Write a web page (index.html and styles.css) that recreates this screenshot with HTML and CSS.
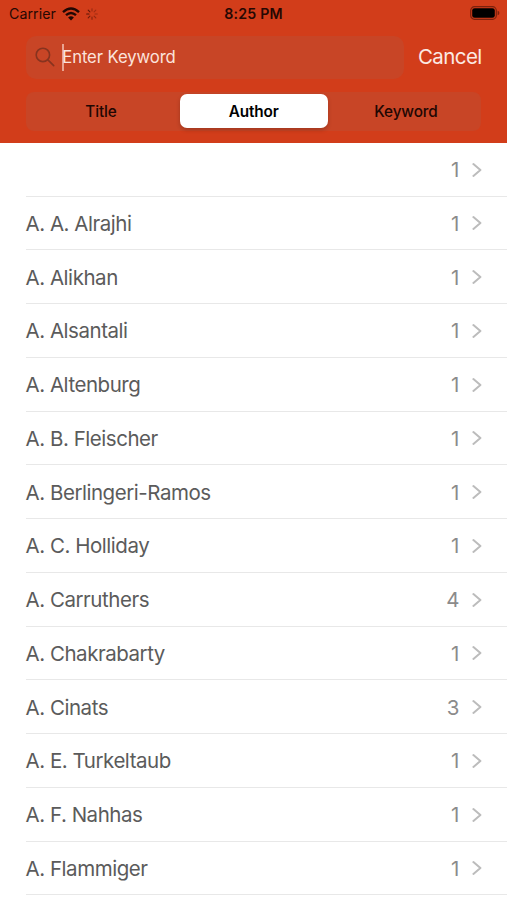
FILE: index.html
```html
<!DOCTYPE html>
<html lang="en">
<head>
<meta charset="utf-8">
<title>Authors</title>
<link rel="stylesheet" href="styles.css">
</head>
<body>
<header class="header">
  <div class="status">
    <div class="carrier"><span>Carrier</span>
      <svg class="wifi" viewBox="0 0 18 14"><g fill="none" stroke="#210703" stroke-width="2.4"><path d="M1 5.1Q9-2.1 17 5.1"/><path d="M4 8.2Q9 3.7 14 8.2"/></g><path d="M6.1 10.4Q9 7.9 11.9 10.4L9 13.4Z" fill="#210703"/></svg>
      <svg class="spinner" viewBox="0 0 12 12" fill="none" stroke="#541407" stroke-width="1.1" stroke-linecap="round"><path d="M6 .7V3" opacity=".45"/><path d="M9.8 2.2 8.1 3.9" opacity=".4"/><path d="M11.3 6H9" opacity=".4"/><path d="M9.8 9.8 8.1 8.1" opacity=".5"/><path d="M6 11.3V9" opacity=".65"/><path d="M2.2 9.8 3.9 8.1" opacity=".8"/><path d="M.7 6H3"/><path d="M2.2 2.2 3.9 3.9" opacity=".9"/></svg>
    </div>
    <div class="time">8:25 PM</div>
    <svg class="battery" viewBox="0 0 30 14"><rect x=".7" y=".7" width="25.6" height="12.6" rx="3.8" fill="none" stroke="#7c210d" stroke-width="1.2"/><rect x="2.2" y="2.2" width="22.6" height="9.6" rx="2.4" fill="#000"/><path d="M27.6 4.7Q29.4 5.3 29.4 7T27.6 9.3Z" fill="#7c210d"/></svg>
  </div>
  <div class="search-row">
    <div class="search">
      <svg class="glass" viewBox="0 0 20 20" fill="none" stroke="#87331f" stroke-width="1.6" stroke-linecap="round"><circle cx="7.9" cy="7.9" r="6.7"/><path d="M12.9 12.9 18.7 18.6"/></svg>
      <span class="caret"></span><span class="placeholder">Enter Keyword</span>
    </div>
    <span class="cancel">Cancel</span>
  </div>
  <div class="segments"><div class="segment first"><span>Title</span></div><div class="segment selected"><span>Author</span></div><div class="segment"><span>Keyword</span></div></div>
</header>
<main class="list"></main>
<script src="list.js"></script>
</body>
</html>
```
FILE: styles.css
```css
* { box-sizing: border-box; }
body { margin: 0; width: 507px; height: 900px; background: #fff; font-family: Inter, "Liberation Sans", sans-serif; }
.header { height: 142.8px; background: #d23d1a; }
.status { height: 36px; padding: 0 8px 0 9px; display: grid; grid-template-columns: 1fr auto 1fr; font-size: 14.2px; line-height: 28px; color: #260803; }
.carrier { display: flex; align-items: center; height: 27px; letter-spacing: .05px; }
.wifi { width: 18px; height: 14px; margin-left: 6px; }
.spinner { width: 12px; height: 12px; margin-left: 6px; }
.time { font-weight: 600; letter-spacing: .2px; margin-left: -1px; }
.battery { width: 30px; height: 14px; justify-self: end; margin: 6px -1px 0 0; }
.search-row { display: flex; padding-left: 26px; height: 43px; }
.search { display: flex; align-items: center; width: 378px; height: 43px; border-radius: 10px; background: #c84526; padding-left: 9px; }
.glass { width: 20px; height: 20px; margin-top: -1px; }
.caret { width: 2px; height: 27px; margin: -1px 0 0 6.5px; background: #e9a491; }
.placeholder { margin: -1px 0 0 -1.3px; color: #fbe3dc; font-size: 16.7px; letter-spacing: -.1px; }
.cancel { margin-left: 14px; color: #fceae4; font-size: 20.5px; line-height: 41px; letter-spacing: -.6px; }
.segments { display: grid; grid-template-columns: 152px 152px 152px; margin: 13px 0 0 26px; width: 455px; height: 39px; border-radius: 8px; background: #c84526; }
.segment { display: flex; align-items: center; justify-content: center; font-size: 15.3px; font-weight: 500; letter-spacing: -.1px; color: #210703; height: 38px; }
.segment.first { padding-right: 2px; }
.segment.selected { background: #fff; margin: 2px; height: 34px; width: 147.5px; border-radius: 7px; font-weight: 600; letter-spacing: -.15px; color: #000; box-shadow: 0 2px 4px #0003; }
.row { display: flex; align-items: center; height: 53.76px; margin-left: 26px; padding: 1px 25px 0 0; border-bottom: 1px solid #e8e8e8; color: #5b5b5b; font-size: 20.5px; letter-spacing: -.46px; }
.name { flex: 1; margin-left: -.5px; }
.count { color: #8b8b8b; }
.chevron { width: 10px; height: 16px; margin-left: 13px; fill: none; stroke: #bcbcbc; stroke-width: 2; stroke-linecap: round; stroke-linejoin: round; }
```
FILE: list.js
```js
const authors = [
  ["", 1], ["A. A. Alrajhi", 1], ["A. Alikhan", 1], ["A. Alsantali", 1],
  ["A. Altenburg", 1], ["A. B. Fleischer", 1], ["A. Berlingeri-Ramos", 1],
  ["A. C. Holliday", 1], ["A. Carruthers", 4], ["A. Chakrabarty", 1],
  ["A. Cinats", 3], ["A. E. Turkeltaub", 1], ["A. F. Nahhas", 1],
  ["A. Flammiger", 1]
];
document.querySelector(".list").innerHTML = authors.map(([name, count]) =>
  `<div class="row"><span class="name">${name}</span><span class="count">${count}</span><svg class="chevron" viewBox="0 0 10 16"><path d="M1.4 2.1 8.4 8 1.4 13.9"/></svg></div>`
).join("");
```
